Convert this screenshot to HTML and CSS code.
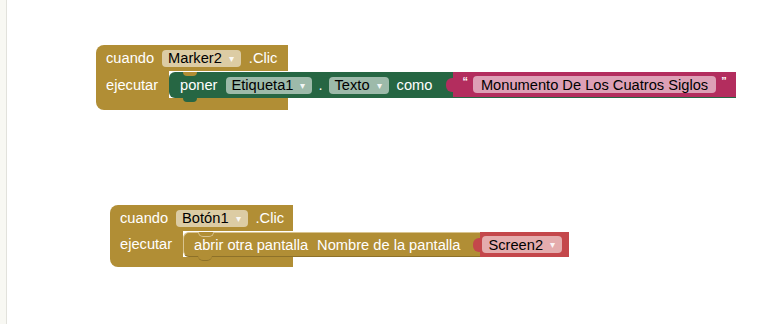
FILE: index.html
```html
<!DOCTYPE html>
<html lang="es">
<head>
    <meta charset="UTF-8">
    <title>Bloques</title>
    <link rel="stylesheet" href="styles.css">
</head>
<body>

    <div class="workspace">
        <!-- Toolbox edge -->
        <div class="toolbox-edge"></div>

        <!-- Blocks canvas -->
        <div class="canvas">

            <!-- cuando Marker2.Clic -->
            <div class="event block-marker">
                <div class="event-head">
                    <span>cuando</span>
                    <span class="field">Marker2<i class="arrow">▾</i></span>
                    <span>.Clic</span>
                </div>
                <div class="event-body">
                    <div class="event-side">ejecutar</div>
                    <div class="stmt setter">
                        <span>poner</span>
                        <span class="field">Etiqueta1<i class="arrow">▾</i></span>
                        <span class="dot">.</span>
                        <span class="field">Texto<i class="arrow">▾</i></span>
                        <span>como</span>
                        <div class="value text-value">
                            <span class="quote">“</span>
                            <span class="field text-field">Monumento De Los Cuatros Siglos</span>
                            <span class="quote">”</span>
                        </div>
                    </div>
                </div>
                <div class="event-foot"></div>
            </div>

            <!-- cuando Botón1.Clic -->
            <div class="event block-boton">
                <div class="event-head">
                    <span>cuando</span>
                    <span class="field">Botón1<i class="arrow">▾</i></span>
                    <span>.Clic</span>
                </div>
                <div class="event-body">
                    <div class="event-side">ejecutar</div>
                    <div class="stmt control">
                        <span>abrir otra pantalla</span>
                        <span class="label-gap">Nombre de la pantalla</span>
                        <div class="value screen-value">
                            <span class="field">Screen2<i class="arrow">▾</i></span>
                        </div>
                    </div>
                </div>
                <div class="event-foot"></div>
            </div>

        </div>
    </div>

</body>
</html>
```

FILE: styles.css
```css
/* General */
body { margin: 0; padding: 0; background: #fff; font-family: "Liberation Sans", Arial, sans-serif; font-size: 14.67px; }
.workspace { display: flex; width: 763px; height: 324px; overflow: hidden; }
.toolbox-edge { width: 6px; background: #f8f8f3; border-right: 1px solid #e2e2dc; }
.canvas { position: relative; flex: 1; }

/* Event blocks (placed on the free canvas) */
.event { position: absolute; display: flex; flex-direction: column; color: #fff; }
.block-marker { left: 89px; top: 45px; width: 192px; }
.block-boton { left: 103px; top: 205px; width: 183px; }

.event-head { display: flex; align-items: center; gap: 8px; height: 26px; padding-left: 10px; background: #b18e35; border-radius: 8px 0 0 0; }
.event-body { display: flex; width: max-content; }
.event-side { width: 63px; padding-left: 10px; display: flex; align-items: center; background: #b18e35; }
.event-foot { height: 12px; background: #b18e35; border-radius: 0 0 0 8px; }
.block-boton .event-foot { height: 10px; }

/* Fields */
.field { display: inline-flex; align-items: center; gap: 7px; height: 17px; padding: 0 7px 0 6px; border-radius: 4px; background: rgba(255, 255, 255, 0.55); color: #000; }
.arrow { font-style: normal; font-size: 10px; color: rgba(255, 255, 255, 0.9); }

/* Statement blocks */
.stmt { position: relative; display: flex; align-items: center; gap: 8px; height: 26px; margin-top: 1px; padding-left: 11px; border-radius: 6px 0 0 6px; }
.stmt::before { content: ""; position: absolute; top: 0; left: 14px; width: 14px; height: 4px; background: #b18e35; border-radius: 0 0 6px 6px; }
.stmt::after { content: ""; position: absolute; bottom: -4px; left: 14px; width: 14px; height: 4px; border-radius: 0 0 6px 6px; }
.setter { background: #266643; }
.setter::after { background: #266643; }
.dot { margin: 0 -2px; }

.control { height: 25px; padding-left: 10px; background: #b18e35; box-sizing: border-box; border: 1px solid #d9c48f; border-right: none; border-bottom-color: #8d7129; }
.control::before { top: -1px; border: 1px solid #d9c48f; border-top: none; }
.control::after { background: #b18e35; bottom: -5px; border-bottom: 1px solid #8d7129; }
.label-gap { margin-left: 1px; }

/* Value blocks */
.value { position: relative; display: flex; align-items: center; align-self: stretch; gap: 5px; margin-left: 13px; }
.value::before { content: ""; position: absolute; left: -7px; top: 6px; width: 8px; height: 14px; background: inherit; border-radius: 6px 0 0 6px; }
.text-value { padding: 0 9px 0 9px; background: #b32d5e; margin-bottom: 1px; }
.text-field { padding: 0 8px; }
.quote { align-self: flex-start; margin-top: 3px; font-size: 11px; font-weight: bold; }
.screen-value { margin-left: 12px; margin-top: -1px; margin-bottom: -1px; padding: 0 7px 0 2px; background: #c4474b; }
```
